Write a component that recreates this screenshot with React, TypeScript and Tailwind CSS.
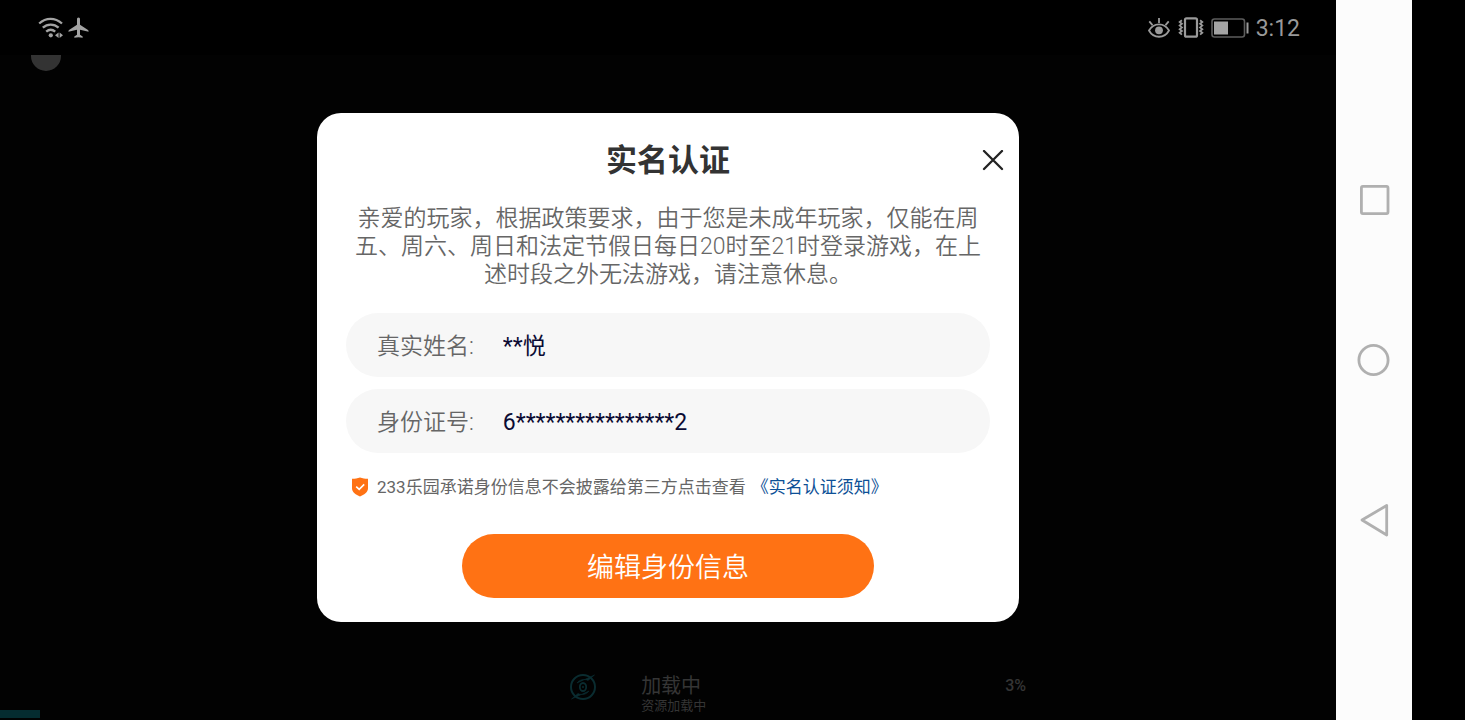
import React from "react";

function WifiIcon() {
  return (
    <svg width="26" height="22" viewBox="0 0 26 22" fill="none" stroke="#a3a3a3" strokeWidth="2.300" aria-hidden="true">
      <path d="M1.200 6.500C8 .3 17 .3 24 6.500" />
      <path d="M4.800 10.700c4.600-4.200 11.200-4.200 15.800 0" />
      <path d="M8.200 14.700c2.800-2.500 6.200-2.500 9 0" />
      <circle cx="12.800" cy="18.300" r="2.100" fill="#a3a3a3" stroke="none" />
      <path d="M20.600 15.500v5.500l-3.600-2.750zM21.600 15.500v5.500l3.400-2.750z" fill="#a3a3a3" stroke="none" />
    </svg>
  );
}

function PlaneIcon() {
  return (
    <svg width="22" height="22" viewBox="0 0 22 22" fill="#a3a3a3" aria-hidden="true">
      <path d="M10.500 .5c1 0 1.500.8 1.500 1.800v5.500l8 5.200c.4.300.6.800.6 1.800L12 12.700v5.100l2.700 1.700v1.300l-4.200-.5-4.200.5v-1.300L9 17.800v-5.100L.4 14.800c0-1 .2-1.500.6-1.800l8-5.200V2.300C9 1.300 9.500.5 10.500.5z" />
    </svg>
  );
}

function EyeIcon() {
  return (
    <svg width="22" height="20" viewBox="0 0 22 20" fill="none" stroke="#9a9a9a" strokeWidth="1.800" aria-hidden="true">
      <path d="M1 12.500C5.500 4.200 16.500 4.200 21 12.500 16.500 20.800 5.500 20.800 1 12.500z" />
      <circle cx="11" cy="12.300" r="3.900" fill="#9a9a9a" stroke="none" />
      <path d="M11 0v5M1.300 3.300l3.200 3.800M20.700 3.300l-3.200 3.800" />
    </svg>
  );
}

function VibrateIcon() {
  return (
    <svg width="26" height="21" viewBox="0 0 26 21" fill="none" stroke="#9a9a9a" aria-hidden="true">
      <rect x="7" y="1.300" width="12" height="18.400" rx="1.500" strokeWidth="2.200" />
      <path d="M3.900 3.200 1.700 5l2.200 1.800-2.200 1.800 2.200 1.800-2.200 1.800 2.200 1.800-2.200 1.800 2.200 1.800M22.100 3.200 24.300 5l-2.200 1.800 2.200 1.800-2.200 1.800 2.200 1.800-2.200 1.800 2.200 1.800-2.200 1.800" strokeWidth="1.800" />
    </svg>
  );
}

function BatteryIcon() {
  return (
    <svg width="38" height="20" viewBox="0 0 38 20" fill="none" aria-hidden="true">
      <rect x="1" y="1" width="32.500" height="18" rx="2.500" stroke="#5c5c5c" strokeWidth="1.600" />
      <rect x="3" y="3.500" width="14" height="13" fill="#a3a3a3" />
      <path d="M36.500 4.500v11" stroke="#9a9a9a" strokeWidth="2" />
    </svg>
  );
}

function ShieldIcon() {
  return (
    <svg width="18" height="20" viewBox="0 0 18 20" fill="none" aria-hidden="true">
      <path d="M9 .5C11.500 1.500 14 1.700 17 1.700v9.500c0 4-4 6.500-8 8.300-4-1.800-8-4.300-8-8.300V1.700C4 1.700 6.500 1.500 9 .5z" fill="#ff7214" />
      <path d="m5.200 9.600 3 2.800 5-5" stroke="#fff" strokeWidth="1.600" />
    </svg>
  );
}

function LoadingIcon() {
  return (
    <svg width="28" height="26" viewBox="0 1 28 26" fill="none" stroke="#0a2c30" aria-hidden="true">
      <circle cx="14" cy="14" r="12" strokeWidth="2" />
      <path d="M25.500 2 19 7.500c-4-2-8.500-1-11 2.500zM2.500 26 9 20.500c4 2 8.500 1 11-2.500z" fill="#0a2c30" strokeWidth=".6" />
      <ellipse cx="14" cy="14" rx="3.200" ry="4" strokeWidth="1.800" />
      <circle cx="14" cy="14" r="1" fill="#0a2c30" stroke="none" />
    </svg>
  );
}

function StatusBar() {
  return (
    <header className="flex h-[55px] items-center justify-between bg-black pr-9 pl-[38px]">
      <div className="flex items-center gap-1">
        <WifiIcon />
        <PlaneIcon />
      </div>
      <div className="flex items-center gap-[7px]">
        <div className="flex items-center gap-2">
          <EyeIcon />
          <VibrateIcon />
        </div>
        <BatteryIcon />
        <time className="pt-0.5 text-[23px] leading-8 text-[#999999]">3:12</time>
      </div>
    </header>
  );
}

function Field({ id, label, value }: { id: string; label: string; value: string }) {
  return (
    <div className="flex h-16 items-center gap-[29px] rounded-full bg-[#f7f7f7] px-[31px] pt-1 text-[23px]">
      <label htmlFor={id} className="shrink-0 font-[350] text-[#666666]">
        {label}
      </label>
      <input id={id} readOnly defaultValue={value} className="min-w-0 flex-1 bg-transparent text-[#0b0b33] outline-none" />
    </div>
  );
}

function VerifyDialog() {
  return (
    <section role="dialog" aria-labelledby="dialog-title" className="mx-auto w-full max-w-[702px] rounded-3xl bg-white px-[29px] pt-6 pb-6">
      <div className="-mr-[15px] grid grid-cols-[24px_1fr_24px] items-center">
        <h1 id="dialog-title" className="col-start-2 -ml-[15px] text-center text-[31px] leading-[48px] font-bold text-[#333333]">
          实名认证
        </h1>
        <button type="button" aria-label="关闭" className="flex size-6 items-center justify-center">
          <svg width="22" height="22" viewBox="0 0 22 22" stroke="#222" strokeWidth="2.300" strokeLinecap="round" aria-hidden="true">
            <path d="m2 1 18 18M20 1 2 19" />
          </svg>
        </button>
      </div>
      <p className="mt-5 px-2 text-center text-[23px] leading-7 font-[350] text-[#666666]">
        亲爱的玩家，根据政策要求，由于您是未成年玩家，仅能在周五、周六、周日和法定节假日每日20时至21时登录游戏，在上述时段之外无法游戏，请注意休息。
      </p>
      <div className="mt-6 flex flex-col gap-3">
        <Field id="real-name" label="真实姓名:" value="**悦" />
        <Field id="id-number" label="身份证号:" value="6****************2" />
      </div>
      <div className="mt-5 flex items-center gap-2 pl-[5px] text-[17px] leading-7 text-[#666666]">
        <ShieldIcon />
        <p>
          233乐园承诺身份信息不会披露给第三方点击查看
          <a href="#notice" className="ml-1.5 text-[#0d5096]">
            《实名认证须知》
          </a>
        </p>
      </div>
      <button type="button" className="mx-auto mt-[33px] block h-16 w-full max-w-[412px] rounded-full bg-[#ff7214] pt-1 text-[27px] font-[350] text-white">
        编辑身份信息
      </button>
    </section>
  );
}

function LoadingFooter() {
  return (
    <footer className="mt-auto">
      <div className="flex items-start pl-[42.6%]">
        <LoadingIcon />
        <div className="ml-11 text-[#353535]">
          <p className="text-xl leading-6">加载中</p>
          <p className="text-[13px] leading-4">资源加载中</p>
        </div>
        <p className="ml-[299px] text-base leading-6 font-medium text-[#353535]">3%</p>
      </div>
      <div role="progressbar" aria-valuenow={3} aria-label="加载中" className="-mt-1 pb-0.5">
        <div className="h-2 w-[3%] bg-[#052c30]" />
      </div>
    </footer>
  );
}

function NavBar() {
  return (
    <nav className="flex w-[76px] shrink-0 flex-col justify-center bg-[#fcfcfc]">
      <button type="button" aria-label="最近任务" className="flex h-40 items-center justify-center">
        <svg width="34" height="34" viewBox="0 0 34 34" fill="none" stroke="#b0b0b0" strokeWidth="2.800" aria-hidden="true">
          <rect x="4.400" y="3.400" width="26.600" height="27.200" rx="1.500" />
        </svg>
      </button>
      <button type="button" aria-label="主页" className="flex h-40 items-center justify-center">
        <svg width="34" height="34" viewBox="0 0 34 34" fill="none" stroke="#b0b0b0" strokeWidth="2.800" aria-hidden="true">
          <circle cx="16.500" cy="17" r="14.600" />
        </svg>
      </button>
      <button type="button" aria-label="返回" className="flex h-40 items-center justify-center">
        <svg width="34" height="34" viewBox="0 0 34 34" fill="none" stroke="#b0b0b0" strokeWidth="2.800" strokeLinejoin="round" aria-hidden="true">
          <path d="M29.700 2.500v29.500L5 17z" />
        </svg>
      </button>
    </nav>
  );
}

export default function App() {
  return (
    <div className="flex min-h-screen bg-black font-[Roboto,'Noto_Sans_CJK_SC',sans-serif]" lang="zh-CN">
      <main className="flex min-w-0 flex-1 flex-col bg-[#020202]">
        <StatusBar />
        <div className="h-[58px] pl-[31px]">
          <div className="h-4 w-[30px] rounded-b-full bg-[#333333]" />
        </div>
        <VerifyDialog />
        <LoadingFooter />
      </main>
      <NavBar />
      <div className="w-[53px] shrink-0" />
    </div>
  );
}
